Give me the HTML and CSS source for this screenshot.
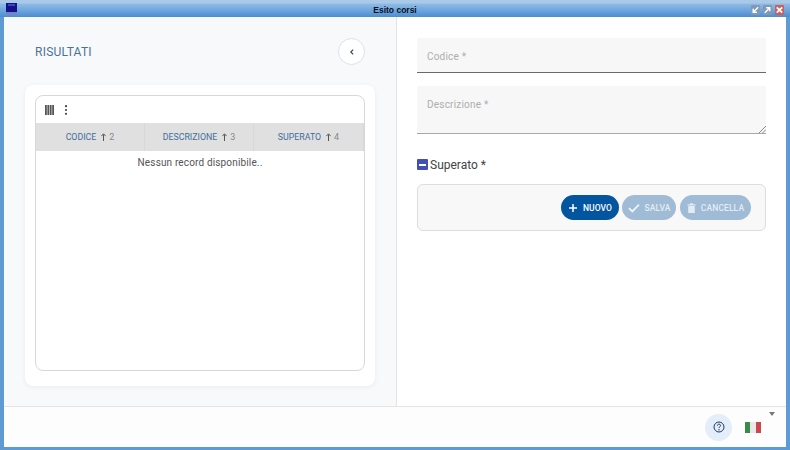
FILE: index.html
```html
<!DOCTYPE html>
<html lang="it">
<head>
<meta charset="utf-8">
<title>Esito corsi</title>
<link rel="stylesheet" href="styles.css">
</head>
<body>
<div class="window">
  <header class="titlebar">
    <svg class="app-icon" width="13" height="12" viewBox="0 0 13 12"><rect width="11" height="11" x="1" y="0" fill="#12128a"/><rect x="3" y="1" width="7" height="2" fill="#3a4ab0"/><rect x="1" y="9" width="11" height="2" fill="#7c80c8"/></svg>
    <span class="title">Esito corsi</span>
    <div class="win-controls">
      <span class="win-btn"><svg width="9" height="10" viewBox="0 0 10 10"><path d="M8 2 L3 7 M2.5 3.5 V7.5 H6.5" fill="none" stroke="#fff" stroke-width="1.6"/></svg></span>
      <span class="win-btn"><svg width="9" height="10" viewBox="0 0 10 10"><path d="M2 8 L7 3 M3.5 2.5 H7.5 V6.5" fill="none" stroke="#fff" stroke-width="1.6"/></svg></span>
      <span class="win-btn win-close"><svg width="9" height="10" viewBox="0 0 10 10"><path d="M2 2 L8 8 M8 2 L2 8" fill="none" stroke="#fff" stroke-width="2"/></svg></span>
    </div>
  </header>
  <div class="client">
    <main class="panes">
      <section class="left">
        <div class="left-head">
          <h1 class="heading">RISULTATI</h1>
          <button class="back-btn" type="button" aria-label="Indietro"><svg width="10" height="10" viewBox="0 0 10 10"><path d="M6.2 2.6 L3.8 5 L6.2 7.4" fill="none" stroke="#3c4a5a" stroke-width="1.2"/></svg></button>
        </div>
        <div class="card">
          <div class="table">
            <div class="toolbar">
              <svg width="9" height="10" viewBox="0 0 9 10"><path d="M0 0H1.8V10H0ZM2.4 0H4.2V10H2.4ZM4.8 0H6.6V10H4.8ZM7.2 0H9V10H7.2Z" fill="#555"/></svg>
              <svg class="dots" width="4" height="10" viewBox="0 0 4 10"><circle cx="2" cy="1.2" r="1.1" fill="#444"/><circle cx="2" cy="5" r="1.1" fill="#444"/><circle cx="2" cy="8.8" r="1.1" fill="#444"/></svg>
            </div>
            <div class="thead">
              <div class="th"><span class="th-label">CODICE</span><svg class="arrow" width="5" height="8" viewBox="0 0 5 8"><path d="M2.5 8V1.5M0.3 3.2L2.5 0.8L4.7 3.2" fill="none" stroke="#555" stroke-width="1"/></svg><span class="order">2</span></div>
              <div class="th"><span class="th-label">DESCRIZIONE</span><svg class="arrow" width="5" height="8" viewBox="0 0 5 8"><path d="M2.5 8V1.5M0.3 3.2L2.5 0.8L4.7 3.2" fill="none" stroke="#555" stroke-width="1"/></svg><span class="order">3</span></div>
              <div class="th"><span class="th-label">SUPERATO</span><svg class="arrow" width="5" height="8" viewBox="0 0 5 8"><path d="M2.5 8V1.5M0.3 3.2L2.5 0.8L4.7 3.2" fill="none" stroke="#555" stroke-width="1"/></svg><span class="order">4</span></div>
            </div>
            <div class="empty">Nessun record disponibile..</div>
          </div>
        </div>
      </section>
      <section class="right">
        <div class="field field-input"><span class="placeholder">Codice *</span></div>
        <div class="field field-area">
          <span class="placeholder">Descrizione *</span>
          <svg class="grip" width="8" height="8" viewBox="0 0 8 8"><path d="M1 8 L8 1 M4.5 8 L8 4.5" stroke="#888" stroke-width="1"/></svg>
        </div>
        <div class="check-row">
          <span class="checkbox"><span class="check-dash"></span></span>
          <span class="check-label">Superato *</span>
        </div>
        <div class="actions">
          <button class="btn btn-primary" type="button"><svg width="10" height="10" viewBox="0 0 10 10"><path d="M5 1V9M1 5H9" stroke="#fff" stroke-width="1.5"/></svg>NUOVO</button>
          <button class="btn btn-muted btn-salva" type="button"><svg width="12" height="10" viewBox="0 0 12 10"><path d="M1 5.2 L4.3 8.4 L11 1.6" fill="none" stroke="#eef3f8" stroke-width="1.8"/></svg>SALVA</button>
          <button class="btn btn-muted btn-cancella" type="button"><svg width="9" height="10" viewBox="0 0 9 10"><path d="M0.5 1.3H8.5V2.4H0.5ZM3 0.2H6V1.2H3ZM1.2 3H7.8V10H1.2Z" fill="#e4ebf3"/></svg>CANCELLA</button>
        </div>
      </section>
    </main>
    <footer class="footer">
      <button class="help" type="button" aria-label="Aiuto"><svg width="12" height="12" viewBox="0 0 12 12"><circle cx="6" cy="6" r="5" fill="none" stroke="#233a5a" stroke-width="1"/><path d="M4.4 4.7C4.4 3.7 5.1 3.2 6 3.2C6.9 3.2 7.6 3.7 7.6 4.6C7.6 5.7 6 5.7 6 7" fill="none" stroke="#233a5a" stroke-width="1"/><circle cx="6" cy="8.7" r="0.7" fill="#233a5a"/></svg></button>
      <div class="flag"><span class="flag-g"></span><span class="flag-w"></span><span class="flag-r"></span></div>
      <span class="caret"></span>
    </footer>
  </div>
</div>
</body>
</html>
```

FILE: styles.css
```css
* { box-sizing: border-box; }
html, body { margin: 0; height: 100%; }
body { font-family: Roboto, "Liberation Sans", sans-serif; overflow: hidden; }
.window {
  width: 790px; height: 450px; display: flex; flex-direction: column;
  background: #5f9bd3; padding: 0 4px 3px;
}
.titlebar {
  height: 17px; margin: 0 -4px; flex: none; position: relative;
  display: flex; align-items: center; justify-content: center;
  background: linear-gradient(#aac9e6 0, #aac9e6 3px, #8ebbe6 4px, #6ba3dc 11px, #4d8ccd 17px);
}
.app-icon { position: absolute; left: 5px; top: 3px; }
.title { font: bold 8.5px "Liberation Sans", sans-serif; color: #0a1020; margin-top: 3px; }
.win-controls { position: absolute; right: 6px; top: 5px; display: flex; gap: 3px; }
.win-btn {
  width: 9px; height: 10px; background: #8099b6; display: flex;
  align-items: center; justify-content: center; border-radius: 1px;
}
.win-close { background: #c9605c; }
.client { flex: 1; display: flex; flex-direction: column; background: #fff; min-height: 0; }
.panes { height: 389px; display: flex; flex: none; }
.left {
  width: 393px; background: #f8f9fb; border-right: 1px solid #e2e4e6;
  padding: 21px 21px 0; flex: none;
}
.left-head { display: flex; justify-content: space-between; align-items: center; height: 27px; padding: 0 10px; margin-bottom: 20px; }
.heading { margin: 0; font-size: 12px; font-weight: 400; color: #4b7396; letter-spacing: 0.25px; }
.back-btn {
  width: 27px; height: 27px; border-radius: 50%; border: 1px solid #dfe1e4;
  background: #fff; padding: 0; display: flex; align-items: center; justify-content: center;
}
.card {
  width: 350px; height: 301px; background: #fff; border-radius: 8px; padding: 10px;
  box-shadow: 0 1px 4px rgba(60, 70, 90, 0.08);
}
.table { height: 276px; border: 1px solid #d8d8d8; border-radius: 8px; overflow: hidden; }
.toolbar { height: 27px; display: flex; align-items: center; gap: 10px; padding: 0 9px; }
.thead { height: 28px; display: grid; grid-template-columns: 109px 109px 1fr; background: #e0e0e0; }
.th {
  display: flex; align-items: center; justify-content: center;
  font-size: 8.8px; color: #3e6f9c; border-right: 1px solid #d8d8d8;
}
.arrow { margin-left: 5px; }
.order { font-size: 9px; color: #888; margin-left: 3px; }
.empty { text-align: center; font-size: 10px; color: #555; letter-spacing: 0.15px; padding-top: 5px; line-height: 14px; }
.right { flex: 1; padding: 21px 20px 0 20px; background: #fff; }
.field { background: #f7f7f7; padding: 0 10px; position: relative; }
.placeholder { font-size: 10px; color: #aeaeae; letter-spacing: 0.2px; }
.field-input { height: 35px; border-bottom: 1px solid #6a6a6a; line-height: 34px; margin-bottom: 13px; }
.field-area { height: 48px; border-bottom: 1px solid #a8a8a8; padding-top: 10px; line-height: 14px; margin-bottom: 25px; }
.grip { position: absolute; right: 0; bottom: 0; }
.check-row { display: flex; align-items: center; gap: 2px; height: 11px; margin-bottom: 14px; }
.checkbox {
  width: 11px; height: 11px; background: #3f51b5; border-radius: 1px;
  display: flex; align-items: center; justify-content: center;
}
.check-dash { width: 7px; height: 2px; background: #fff; }
.check-label { font-size: 12px; color: #444; }
.actions {
  height: 47px; border: 1px solid #ddd; border-radius: 6px; background: #f8f8f8;
  display: flex; align-items: center; justify-content: flex-end; padding-right: 14px;
}
.btn {
  height: 25px; border: 0; border-radius: 13px; padding: 0; display: flex;
  align-items: center; justify-content: center; gap: 5px;
  font: 500 8.5px Roboto, sans-serif; letter-spacing: 0.1px; color: #fff;
}
.btn-primary { width: 58px; background: #04559f; }
.btn-muted { background: #a0bbd6; color: #e4ebf3; }
.btn-salva { width: 54px; margin-left: 3px; }
.btn-cancella { width: 71px; margin-left: 4px; }
.footer { flex: 1; border-top: 1px solid #e2e4e6; background: #fdfdfd; position: relative; display: flex; align-items: center; justify-content: flex-end; padding-right: 25px; }
.help {
  width: 27px; height: 27px; border: 0; border-radius: 50%; background: #e3eefa;
  padding: 0; display: flex; align-items: center; justify-content: center; margin-right: 13px;
}
.flag { width: 16px; height: 11px; display: flex; }
.flag span { flex: 1; }
.flag-g { background: #3c8a4a; }
.flag-w { background: #e8e8e8; }
.flag-r { background: #c9484e; }
.caret {
  position: absolute; right: 11px; top: 5px; width: 0; height: 0;
  border-left: 3px solid transparent; border-right: 3px solid transparent; border-top: 4px solid #777;
}
```
